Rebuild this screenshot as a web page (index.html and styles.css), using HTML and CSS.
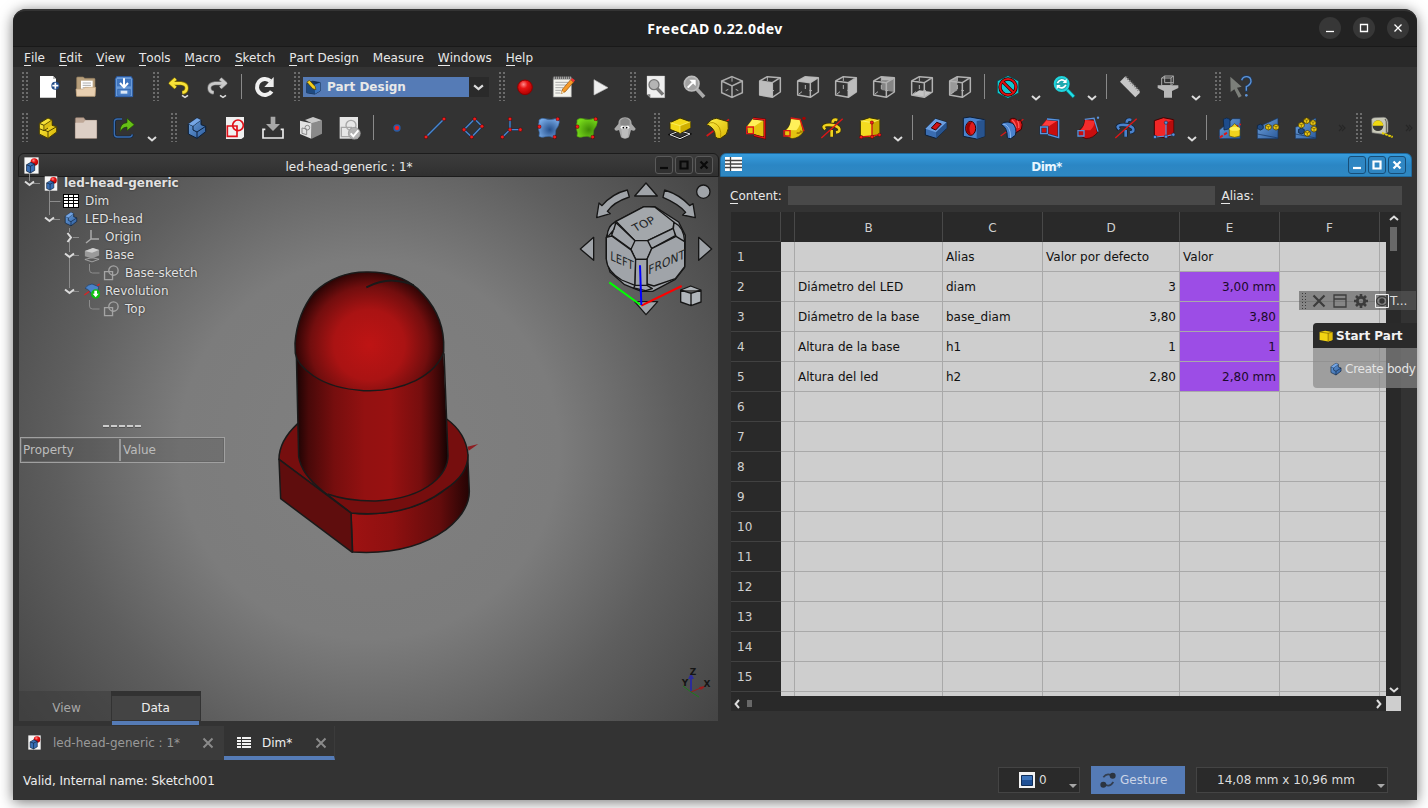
FILE: index.html
```html
<!DOCTYPE html>
<html lang="en">
<head>
<meta charset="utf-8">
<title>FreeCAD 0.22.0dev</title>
<link rel="stylesheet" href="styles.css">
</head>
<body>
<svg class="defs" width="0" height="0" aria-hidden="true">
<defs>
<linearGradient id="gy" x1="0" y1="0" x2="1" y2="1"><stop offset="0" stop-color="#fff04a"/><stop offset="1" stop-color="#d8b400"/></linearGradient>
<linearGradient id="gb" x1="0" y1="0" x2="1" y2="1"><stop offset="0" stop-color="#6fa2dc"/><stop offset="1" stop-color="#2c5c9e"/></linearGradient>
<radialGradient id="gball" cx=".4" cy=".3" r=".7"><stop offset="0" stop-color="#ff8a8a"/><stop offset=".4" stop-color="#e81414"/><stop offset="1" stop-color="#b00000"/></radialGradient>
<radialGradient id="gblob" cx=".55" cy=".6" r=".6"><stop offset="0" stop-color="#26508c"/><stop offset="1" stop-color="#76a8e4"/></radialGradient>
<radialGradient id="ggrn" cx=".6" cy=".6" r=".6"><stop offset="0" stop-color="#3f8a06"/><stop offset="1" stop-color="#76d81a"/></radialGradient>
</defs>
<symbol id="new" viewBox="0 0 72 72"><path d="M12 3h39l9 9v56H12z" fill="#fff"/><path d="M51 3v9h9z" fill="#bbb"/><circle cx="58" cy="32" r="12" fill="#204a87"/><path d="M58 23v18M49 32h18" stroke="#fff" stroke-width="5"/></symbol>
<symbol id="open" viewBox="0 0 72 72"><path d="M8 9q0-3 3-3h17l4 4h28q3 0 3 3v50H8z" fill="#b79f7c" stroke="#8f7a5c" stroke-width="2"/><path d="M21 17h35v30H21z" fill="#fff"/><path d="M26 24h25M26 31h25M26 38h18" stroke="#aaa" stroke-width="3"/><path d="M6 42h22l5-5h32l-2 27H8z" fill="#e8cfb0" stroke="#c0a27c" stroke-width="2"/></symbol>
<symbol id="save" viewBox="0 0 72 72"><path d="M14 5h44l4 8v52H10V13z" fill="#6a9bd8" stroke="#2a5ca8" stroke-width="3"/><path d="M15 12h42v22H15z" fill="#3f74bd"/><path d="M36 10v24M24 24l12 13 12-13" stroke="#fff" stroke-width="6" fill="none"/><path d="M17 43h38v18H17z" fill="#4a80c8" stroke="#2a5ca8" stroke-width="2"/><path d="M26 47h20v9H26z" fill="#dbe7f7"/></symbol>
<symbol id="undo" viewBox="0 0 72 72"><g fill="none" stroke="#8a7400" stroke-width="12" stroke-linejoin="round"><path d="M12 25h30q17 2 17 14t-13 14"/><path d="M26 11L11 25l15 13"/></g><g fill="none" stroke="#f8e238" stroke-width="8"><path d="M12 25h30q17 2 17 14t-13 14"/><path d="M26 11L11 25l15 13"/></g><path d="M45 61l9 6 9-6" stroke="#ddd" stroke-width="5" fill="none"/></symbol>
<symbol id="redo" viewBox="0 0 72 72"><g fill="none" stroke="#777" stroke-width="12" stroke-linejoin="round"><path d="M60 25H30q-17 2-17 14t13 14"/><path d="M46 11l15 14-15 13"/></g><g fill="none" stroke="#cacaca" stroke-width="8"><path d="M60 25H30q-17 2-17 14t13 14"/><path d="M46 11l15 14-15 13"/></g><path d="M45 61l9 6 9-6" stroke="#ddd" stroke-width="5" fill="none"/></symbol>
<symbol id="reload" viewBox="0 0 72 72"><path d="M56 49A24 24 0 1 1 52 18" fill="none" stroke="#f0f0f0" stroke-width="12"/><path d="M62 6v30H34z" fill="#eee"/></symbol>
<symbol id="pd" viewBox="0 0 72 72"><path d="M8 20l26-10 34 6v38L44 68 8 62z" fill="#143766" stroke="#0c1c30" stroke-width="3"/><path d="M42 26l26-10v38L44 68z" fill="#3d75be"/><path d="M8 20l34 6 2 42-36-6z" fill="#1f4a80"/><path d="M8 14l12-8 26 28 3 14-14-4z" fill="#f4cf1c" stroke="#4a3b00" stroke-width="3"/></symbol>
<symbol id="rec" viewBox="0 0 72 72"><circle cx="36" cy="37" r="22" fill="url(#gball)" stroke="#8c0000" stroke-width="3"/></symbol>
<symbol id="note" viewBox="0 0 72 72"><path d="M7 8h54v58H7z" fill="#f4f4ee" stroke="#999" stroke-width="2"/><path d="M7 4h54v9H7z" fill="#555"/><path d="M10 5v7M16 5v7M22 5v7M28 5v7M34 5v7M40 5v7M46 5v7M52 5v7M58 5v7" stroke="#ddd" stroke-width="2"/><path d="M13 22h38M13 30h32M13 38h24M13 46h18M13 54h14" stroke="#9a9a9a" stroke-width="2.5"/><path d="M30 56l5-14 24-28 9 7-25 29z" fill="#f59a2a" stroke="#8a4a08" stroke-width="2"/><path d="M59 14l4-5 9 7-4 6z" fill="#e33"/><path d="M30 56l3-9 6 6z" fill="#f2dcae"/></symbol>
<symbol id="play" viewBox="0 0 72 72"><path d="M15 14v46l42-22z" fill="#eee" stroke="#bbb" stroke-width="2"/></symbol>
<symbol id="fit" viewBox="0 0 72 72"><path d="M9 3h53v65H19L9 58z" fill="#efefef" stroke="#ccc" stroke-width="1"/><path d="M9 58h10v10z" fill="#777"/><path d="M39 40l18 19" stroke="#777" stroke-width="10"/><circle cx="30" cy="29" r="15" fill="#b5b5b5" stroke="#777" stroke-width="4"/></symbol>
<symbol id="fitsel" viewBox="0 0 72 72"><path d="M44 42l22 24" stroke="#aaa" stroke-width="11"/><circle cx="29" cy="26" r="22" fill="#a2a2a2" stroke="#bcbcbc" stroke-width="5"/><path d="M17 38l15-15" stroke="#fff" stroke-width="6"/><path d="M22 14h19v19z" fill="#fff"/></symbol>
<symbol id="iso" viewBox="0 0 72 72"><g fill="none" stroke="#adadad" stroke-width="4.500"><path d="M36 5l31 13v35L36 67 5 53V18zM5 18l31 15 31-15M36 33v34"/><path d="M36 5v15M17 47l8-4M55 47l-8-4" stroke-width="3"/></g></symbol>
<symbol id="wire" viewBox="0 0 72 72"><g fill="none" stroke="#b2b2b2" stroke-width="4.500" stroke-linejoin="round"><path d="M5 18l38 5v44L5 60zM5 18L28 5l39 3v43L43 67M43 23L67 8"/><path d="M28 5v13M28 30v12M9 57l9-7M40 46l8 1" stroke-width="3"/></g></symbol>
<symbol id="vfront" viewBox="0 0 72 72"><use href="#wire"/><path d="M5 18l38 5v44L5 60z" fill="#bdbdbd"/></symbol>
<symbol id="vtop" viewBox="0 0 72 72"><use href="#wire"/><path d="M5 18L28 5l39 3-24 15z" fill="#bdbdbd"/></symbol>
<symbol id="vright" viewBox="0 0 72 72"><use href="#wire"/><path d="M43 23L67 8v43L43 67z" fill="#bdbdbd"/></symbol>
<symbol id="vrear" viewBox="0 0 72 72"><path d="M28 5l39 3v43l-39-6z" fill="#858585"/><path d="M28 5l39 3-7 8H30z" fill="#b5b5b5"/><use href="#wire"/></symbol>
<symbol id="vbottom" viewBox="0 0 72 72"><path d="M5 60l23-14 39 5-24 16z" fill="#c4c4c4"/><use href="#wire"/></symbol>
<symbol id="vleft" viewBox="0 0 72 72"><path d="M5 18L28 5v41L5 60z" fill="#999"/><use href="#wire"/></symbol>
<symbol id="nostyle" viewBox="0 0 72 72"><path d="M36 2l32 16v36L36 70 4 54V18z" fill="#12c8d0" stroke="#063f42" stroke-width="2"/><circle cx="36" cy="36" r="24" fill="none" stroke="#2a0000" stroke-width="10"/><path d="M19 19l34 34" stroke="#2a0000" stroke-width="10"/><circle cx="36" cy="36" r="24" fill="none" stroke="#e01212" stroke-width="6"/><path d="M19 19l34 34" stroke="#e01212" stroke-width="6"/></symbol>
<symbol id="sync" viewBox="0 0 72 72"><path d="M44 43l22 23" stroke="#0a7f85" stroke-width="11"/><path d="M46 45l19 20" stroke="#20dfe6" stroke-width="7"/><circle cx="29" cy="27" r="21" fill="#20a8ae" stroke="#1fd6de" stroke-width="6"/><path d="M16 24q11-16 24-4M42 30q-11 15-24 4" stroke="#fff" stroke-width="5" fill="none"/><path d="M44 11v13H32zM14 43V30h12z" fill="#fff"/></symbol>
<symbol id="ruler" viewBox="0 0 72 72"><path d="M6 20L22 4l43 44v6L52 67z" fill="#c6c6c6"/><path d="M24 6l38 40" stroke="#777" stroke-width="8" stroke-dasharray="2.500 5"/></symbol>
<symbol id="scale" viewBox="0 0 72 72"><g fill="none" stroke="#aaa" stroke-width="3"><path d="M17 9l9-6h26v22l-7 7H17zM17 9h28v23M45 9l7-6M26 3v20h26"/></g><path d="M5 31h62v8L48 48v20H24V48L5 39z" fill="#b8b8b8"/></symbol>
<symbol id="whats" viewBox="0 0 72 72"><path d="M4 5l34 30-14 3 14 25-9 5-13-25L5 51z" fill="#7c7f7a"/><path d="M38 16Q42 4 54 5t12 15q-2 10-14 15v15" fill="none" stroke="#1c3c66" stroke-width="8"/><path d="M38 16Q42 4 54 5t12 15q-2 10-14 15v12" fill="none" stroke="#5f94d6" stroke-width="4"/><circle cx="52" cy="61" r="4" fill="#5f94d6"/></symbol>
<symbol id="part" viewBox="0 0 72 72"><path d="M10 22L36 6l12 6v16l14 4v16L36 67 10 54z" fill="url(#gy)" stroke="#4c4000" stroke-width="3"/><path d="M10 22l14 6 24-16M24 28v14l12 5 26-15M36 47v20M10 38l14 6 12-8" fill="none" stroke="#4c4000" stroke-width="3"/><path d="M24 28l24-16v16L24 42z" fill="#caa800" opacity=".5"/></symbol>
<symbol id="folder" viewBox="0 0 72 72"><path d="M4 8q0-3 3-3h22l6 8h33v54H4z" fill="#bfa897" stroke="#8f7a6c" stroke-width="2"/><path d="M4 20h24l6-7h34v54H4z" fill="#ddcfc5"/></symbol>
<symbol id="link" viewBox="0 0 72 72"><path d="M30 9H16q-9 0-9 9v36q0 9 9 9h36q8 0 9-8" fill="none" stroke="#0d233f" stroke-width="8"/><path d="M30 9H16q-9 0-9 9v36q0 9 9 9h36q8 0 9-8" fill="none" stroke="#3a6cae" stroke-width="4"/><path d="M24 47q0-26 21-27V7l22 19-22 18V33q-12-1-21 14z" fill="#66c016" stroke="#1c4a00" stroke-width="2"/></symbol>
<symbol id="body" viewBox="0 0 72 72"><path d="M10 24L36 6l12 6v14l14 5v16L36 67 10 54z" fill="url(#gb)" stroke="#0c1f38" stroke-width="3"/><path d="M10 24l14 6 24-18M24 30v12l12 6 26-17M36 48v19" fill="none" stroke="#0c1f38" stroke-width="3"/><path d="M10 24L36 6l12 6-24 18z" fill="#7cadec" opacity=".8"/></symbol>
<symbol id="sketch" viewBox="0 0 72 72"><path d="M9 3h54v60l-8 6H9z" fill="#f0f0f0"/><g fill="none" stroke="#e01018" stroke-width="5"><path d="M13 30h29v31H13z"/><circle cx="45" cy="28" r="16"/></g></symbol>
<symbol id="import" viewBox="0 0 72 72"><path d="M29 2h14v22h14L36 45 15 24h14z" fill="#a8a8a8"/><path d="M13 40H6v26h60V40h-7" fill="none" stroke="#ececec" stroke-width="5"/></symbol>
<symbol id="mapsk" viewBox="0 0 72 72"><path d="M18 12L42 3l27 10-28 10z" fill="#c8c8c8"/><path d="M36 22l33-9v40L38 68z" fill="#8a8a8a"/><path d="M3 14l34 8v46L3 54z" fill="#e2e2e2"/><g fill="none" stroke="#8a8a8a" stroke-width="3"><path d="M9 36l14 3v17L9 52z"/><circle cx="25" cy="35" r="7"/></g></symbol>
<symbol id="valid" viewBox="0 0 72 72"><path d="M8 3h55v65H8z" fill="#e6e6e6"/><g fill="none" stroke="#a6a6a6" stroke-width="4"><path d="M13 34h30v28H13z"/><circle cx="42" cy="28" r="15"/></g><circle cx="52" cy="52" r="18" fill="#b2b2b2" stroke="#909090" stroke-width="2"/><path d="M41 52l8 9 15-18" fill="none" stroke="#fff" stroke-width="6"/></symbol>
<symbol id="dot" viewBox="0 0 72 72"><circle cx="36" cy="36" r="11" fill="#2a5ca4"/><circle cx="36" cy="36" r="6.500" fill="#ef2020"/></symbol>
<symbol id="nd" viewBox="0 0 14 14"><circle cx="7" cy="7" r="5.500" fill="#f01c1c" stroke="#4a0000" stroke-width="1.500"/></symbol>
<symbol id="line" viewBox="0 0 72 72"><path d="M9 63L63 9" stroke="#14304f" stroke-width="7"/><path d="M9 63L63 9" stroke="#4c86cc" stroke-width="4"/><use href="#nd" x="2" y="56" width="14" height="14"/><use href="#nd" x="56" y="2" width="14" height="14"/></symbol>
<symbol id="plane" viewBox="0 0 72 72"><path d="M41 9l22 22-31 32L9 41z" fill="none" stroke="#14304f" stroke-width="7"/><path d="M41 9l22 22-31 32L9 41z" fill="none" stroke="#4c86cc" stroke-width="4"/><use href="#nd" x="34" y="2" width="14" height="14"/><use href="#nd" x="56" y="24" width="14" height="14"/><use href="#nd" x="25" y="56" width="14" height="14"/><use href="#nd" x="2" y="34" width="14" height="14"/></symbol>
<symbol id="cs" viewBox="0 0 72 72"><path d="M33 8v33h31M33 41L10 64" fill="none" stroke="#14304f" stroke-width="7"/><path d="M33 8v33h31M33 41L10 64" fill="none" stroke="#4c86cc" stroke-width="4"/><use href="#nd" x="26" y="2" width="14" height="14"/><use href="#nd" x="26" y="34" width="14" height="14"/><use href="#nd" x="57" y="34" width="14" height="14"/><use href="#nd" x="3" y="56" width="14" height="14"/></symbol>
<symbol id="blobb" viewBox="0 0 72 72"><path d="M6 12q8-8 18-4 18 7 40-3 6 14-1 26-10 12-8 20 1 10-6 14-12-7-24-3-12 4-19-1 3-12-1-20-3-10 1-22z" fill="url(#gblob)" stroke="#3668a8" stroke-width="2"/><use href="#nd" x="0" y="25" width="14" height="14"/><use href="#nd" x="55" y="2" width="14" height="14"/><use href="#nd" x="46" y="56" width="14" height="14"/></symbol>
<symbol id="blobg" viewBox="0 0 72 72"><path d="M6 12q8-8 18-4 18 7 40-3 6 14-1 26-10 12-8 20 1 10-6 14-12-7-24-3-12 4-19-1 3-12-1-20-3-10 1-22z" fill="url(#ggrn)" stroke="#4d9c0e" stroke-width="2"/><use href="#nd" x="0" y="25" width="14" height="14"/><use href="#nd" x="55" y="2" width="14" height="14"/><use href="#nd" x="46" y="56" width="14" height="14"/></symbol>
<symbol id="sheep" viewBox="0 0 72 72"><path d="M36 4q-20 0-20 20L4 38q2 10 14 4l6 22q12 8 24 0l6-22q12 6 14-4L56 24Q56 4 36 4z" fill="#a9a9a9"/><path d="M22 14q14-16 28 0v14H22z" fill="#8a8a8a"/><path d="M24 30h24l-4 34q-8 5-16 0z" fill="#bdbdbd"/><ellipse cx="29" cy="34" rx="6" ry="5" fill="#fff"/><ellipse cx="43" cy="34" rx="6" ry="5" fill="#fff"/><circle cx="31" cy="35" r="2.500"/><circle cx="41" cy="35" r="2.500"/></symbol>
<symbol id="pad" viewBox="0 0 72 72"><path d="M6 56l30-12 30 10-30 14z" fill="none" stroke="#111" stroke-width="7"/><path d="M6 56l30-12 30 10-30 14z" fill="none" stroke="#e8e8e8" stroke-width="3"/><path d="M6 20L36 6l31 11v18L36 52 6 40z" fill="#f2d818" stroke="#3c3300" stroke-width="3"/><path d="M36 29l31-12v18L36 52z" fill="#cfae00"/><path d="M6 20l30 9 31-12M36 29v23" fill="none" stroke="#fff47a" stroke-width="2"/></symbol>
<symbol id="rev" viewBox="0 0 72 72"><path d="M2 60L69 10" stroke="#d81818" stroke-width="5"/><path d="M3 26Q14 8 32 7l34 10q4 22-5 38L42 68q-10 0-14-6Q28 36 3 26z" fill="url(#gy)" stroke="#3c3300" stroke-width="3"/><path d="M4 26q8-8 18-6 26 8 22 46" fill="none" stroke="#b89800" stroke-width="3"/></symbol>
<symbol id="loft" viewBox="0 0 72 72"><path d="M9 31L26 8l36 3v54l-30-10-20-4z" fill="#e4c410"/><path d="M9 33L27 9l33 3-32 21z" fill="#fff05a"/><path d="M27 7l35 4v55l-32-8" fill="none" stroke="#5c0000" stroke-width="7"/><path d="M27 7l35 4v55l-32-8M8 33h20v20H8z" fill="none" stroke="#e01616" stroke-width="4"/></symbol>
<symbol id="sweep" viewBox="0 0 72 72"><path d="M8 44Q28 30 26 8l30 2 8 38q-12 18-34 20L8 58z" fill="#e4c410" stroke="#3c3300" stroke-width="2"/><path d="M27 10l28 3q2 14-12 30L14 42q12-12 13-32z" fill="#fff05a"/><path d="M44 50q10 4 12-4l6 2" stroke="#a87e00" stroke-width="5" fill="none"/><path d="M26 6l28 4 12 36M6 44h18v16H6z" fill="none" stroke="#e01616" stroke-width="4"/><circle cx="66" cy="7" r="5" fill="#a00"/></symbol>
<symbol id="helix" viewBox="0 0 72 72"><g fill="none" stroke="#3c3300" stroke-width="12"><path d="M38 20q0-12 14-8M16 40q-12-10 4-13 24-2 36 8 8 12-8 14M35 42v20"/></g><g fill="none" stroke="#f0d21e" stroke-width="8"><path d="M38 20q0-12 14-8M16 40q-12-10 4-13 24-2 36 8 8 12-8 14M35 42v20"/></g><path d="M4 66L68 8" stroke="#e01616" stroke-width="4"/></symbol>
<symbol id="prim" viewBox="0 0 72 72"><path d="M7 14L34 5l31 6v44L42 66 7 60z" fill="#f4dc20" stroke="#3c3300" stroke-width="3"/><path d="M42 20l22-9v43L42 65z" fill="#c9a800"/><path d="M8 14l34 6 22-9" fill="none" stroke="#fff78a" stroke-width="2"/><path d="M42 20v40L9 63M42 60l22-4" fill="none" stroke="#d01212" stroke-width="4"/><use href="#nd" x="35" y="13" width="13" height="13"/><use href="#nd" x="3" y="57" width="13" height="13"/><use href="#nd" x="36" y="56" width="13" height="13"/><use href="#nd" x="58" y="50" width="13" height="13"/></symbol>
<symbol id="pocket" viewBox="0 0 72 72"><path d="M4 38L34 8l34 11v18L36 67 4 57z" fill="#3a6db2" stroke="#0c1f38" stroke-width="3"/><path d="M4 38L34 8l34 11-32 30z" fill="#6b9fe0"/><path d="M36 49l32-30v18L36 67z" fill="#28548f"/><path d="M22 36l16-17 14 5-17 18z" fill="#d01414" stroke="#300" stroke-width="3"/></symbol>
<symbol id="hole" viewBox="0 0 72 72"><path d="M4 6l20-3 44 8v50l-24 8L4 61z" fill="#4a82cc" stroke="#0c1f38" stroke-width="3"/><path d="M44 15l24-4v50l-24 8z" fill="#28548f"/><ellipse cx="26" cy="37" rx="15" ry="21" fill="#e01c1c" stroke="#300" stroke-width="3"/><path d="M30 18q-14 18-3 38Q13 54 13 36t17-18z" fill="#900"/></symbol>
<symbol id="groove" viewBox="0 0 72 72"><path d="M2 60L70 10" stroke="#d81818" stroke-width="4"/><path d="M30 10q14-8 22 4l10-2q8 14 2 28l-16 10-18-10z" fill="#d81818" stroke="#400" stroke-width="3"/><path d="M36 12q10 8 12 24M52 14q6 8 4 22" fill="none" stroke="#ff5c5c" stroke-width="4"/><path d="M4 26q6-10 20-8l14 4q14 14 8 36l-14 10q-8 0-10-4Q22 34 4 26z" fill="#4a82cc" stroke="#0c1f38" stroke-width="3"/><path d="M8 24q24 2 24 42" fill="none" stroke="#8ab6f0" stroke-width="3"/></symbol>
<symbol id="sloft" viewBox="0 0 72 72"><path d="M9 31L26 10l34 2v53l-30-10-20-4z" fill="#c80e0e"/><path d="M9 33L27 11l33 2-32 21z" fill="#ff3c3c"/><path d="M27 9l35 3v53l-32-9M8 33h20v20H8z" fill="none" stroke="#14304f" stroke-width="7"/><path d="M27 9l35 3v53l-32-9M8 33h20v20H8z" fill="none" stroke="#5a93dc" stroke-width="4"/></symbol>
<symbol id="ssweep" viewBox="0 0 72 72"><path d="M8 44Q28 30 26 10l30 2 8 38q-12 16-34 18L8 58z" fill="#c80e0e" stroke="#300" stroke-width="2"/><path d="M27 12l28 3q2 14-12 28l-29-1q12-12 13-30z" fill="#f42c2c"/><path d="M26 10l28-3 12 40M6 44h18v16H6z" fill="none" stroke="#5a93dc" stroke-width="4"/><circle cx="66" cy="5" r="3.500" fill="#5a93dc"/></symbol>
<symbol id="shelix" viewBox="0 0 72 72"><g fill="none" stroke="#0c1f38" stroke-width="12"><path d="M38 20q0-12 14-8M16 40q-12-10 4-13 24-2 36 8 8 12-8 14M35 42v20"/></g><g fill="none" stroke="#4a82cc" stroke-width="8"><path d="M38 20q0-12 14-8M16 40q-12-10 4-13 24-2 36 8 8 12-8 14M35 42v20"/></g><path d="M4 66L68 8" stroke="#e01616" stroke-width="4"/></symbol>
<symbol id="sprim" viewBox="0 0 72 72"><path d="M7 14L34 5l31 6v44L42 66 7 60z" fill="#f22626" stroke="#400" stroke-width="3"/><path d="M42 20l22-9v43L42 65z" fill="#b80c0c"/><path d="M42 20v40L9 63M42 60l22-4" fill="none" stroke="#5a93dc" stroke-width="3.500"/><g fill="#5a93dc" stroke="#14304f" stroke-width="2"><circle cx="42" cy="20" r="5"/><circle cx="9" cy="63" r="5"/><circle cx="42" cy="62" r="5"/><circle cx="64" cy="56" r="5"/></g></symbol>
<symbol id="mirror" viewBox="0 0 72 72"><path d="M4 42L44 8h23v60H4z" fill="url(#gb)" stroke="#16335c" stroke-width="2"/><path d="M16 10q10-8 20 0v28l-18 4z" fill="#1d4c8c" stroke="#0c1f38" stroke-width="2"/><path d="M6 64l24-16M52 34l16-10" stroke="#e01616" stroke-width="6" stroke-dasharray="10 5"/><path d="M34 38l16-15 16 15v22q-16 8-32 0z" fill="#f0d21e" stroke="#5a4a00" stroke-width="2"/><ellipse cx="50" cy="38" rx="16" ry="6" fill="#fff05a"/></symbol>
<symbol id="minic" viewBox="0 0 20 20"><path d="M2 6l8-4 8 4v8l-8 5-8-5z" fill="#ecc814" stroke="#4a3c00" stroke-width="2"/><path d="M2 6l8 3 8-3M10 9v9" fill="none" stroke="#4a3c00" stroke-width="1.500"/></symbol>
<symbol id="minib" viewBox="0 0 20 20"><path d="M2 6l8-4 8 4v8l-8 5-8-5z" fill="#1f4a84" stroke="#0c1f38" stroke-width="2"/></symbol>
<symbol id="linpat" viewBox="0 0 72 72"><path d="M4 34L66 6v62H4z" fill="url(#gb)" stroke="#16335c" stroke-width="2"/><path d="M4 54l62 12" stroke="#16335c" stroke-width="2"/><use href="#minib" x="2" y="22" width="22" height="22"/><use href="#minic" x="26" y="22" width="22" height="22"/><use href="#minic" x="49" y="22" width="22" height="22"/></symbol>
<symbol id="polpat" viewBox="0 0 72 72"><path d="M4 34L66 6v62H4z" fill="url(#gb)" stroke="#16335c" stroke-width="2"/><path d="M4 54l62 12" stroke="#16335c" stroke-width="2"/><use href="#minib" x="11" y="34" width="22" height="22"/><use href="#minic" x="11" y="16" width="22" height="22"/><use href="#minic" x="27" y="3" width="22" height="22"/><use href="#minic" x="46" y="9" width="22" height="22"/><use href="#minic" x="49" y="28" width="22" height="22"/><use href="#minic" x="29" y="41" width="22" height="22"/></symbol>
<symbol id="tape" viewBox="0 0 72 72"><path d="M5 10Q6 5 14 5l26-1q12 0 14 14v30l-14 7-34-5z" fill="#c9c9b8" stroke="#777" stroke-width="2"/><circle cx="24" cy="29" r="16" fill="#3a3a36"/><path d="M8 29a16 16 0 0 1 32 0z" fill="#f0d810"/><path d="M45 9q5 4 4 18v22" stroke="#55554c" stroke-width="3" fill="none"/><path d="M36 51l32 12" stroke="#e8d000" stroke-width="6" stroke-dasharray="8 2"/></symbol>
<symbol id="doc" viewBox="0 0 42 48"><path d="M1 1h40v46H1z" fill="#f6f6f6"/><circle cx="29" cy="14" r="10.500" fill="url(#gball)"/><path d="M7 22l12-7 11 5v18l-12 7-11-5z" fill="#3a6fb5" stroke="#0c1f38" stroke-width="2"/><path d="M7 22l11 4v19M18 26l12-6" fill="none" stroke="#0c1f38" stroke-width="2"/></symbol>
<symbol id="skg" viewBox="0 0 72 72"><g fill="none" stroke="#a4a4a4" stroke-width="6"><path d="M7 30h36v36H7z"/><circle cx="47" cy="25" r="21"/></g></symbol>
<symbol id="chev" viewBox="0 0 10 6"><path d="M1 1l4 3.400L9 1" fill="none" stroke="#dcdcdc" stroke-width="2"/></symbol>
</svg>

<div class="window">
  <header class="titlebar"><span class="wtitle">FreeCAD 0.22.0dev</span>
    <div class="wbtns">
      <i><svg viewBox="0 0 22 22"><path d="M7 14.500h8"/></svg></i>
      <i><svg viewBox="0 0 22 22"><path d="M7.500 7.500h7v7h-7z"/></svg></i>
      <i><svg viewBox="0 0 22 22"><path d="M7.500 7.500l7 7M14.500 7.500l-7 7"/></svg></i>
    </div>
  </header>
  <nav class="menu"><span><u>F</u>ile</span><span><u>E</u>dit</span><span><u>V</u>iew</span><span><u>T</u>ools</span><span><u>M</u>acro</span><span><u>S</u>ketch</span><span><u>P</u>art Design</span><span>Measure</span><span><u>W</u>indows</span><span><u>H</u>elp</span></nav>

  <div class="toolbar">
    <b class="grip first"></b><svg class="ic"><use href="#new"/></svg><svg class="ic"><use href="#open"/></svg><svg class="ic"><use href="#save"/></svg>
    <b class="grip"></b><svg class="ic"><use href="#undo"/></svg><svg class="ic"><use href="#redo"/></svg><b class="sep"></b><svg class="ic"><use href="#reload"/></svg>
    <b class="grip"></b><div class="combo"><div class="combo-val"><svg><use href="#pd"/></svg>Part Design</div><svg class="cchev"><use href="#chev"/></svg></div>
    <b class="grip"></b><svg class="ic"><use href="#rec"/></svg><svg class="ic"><use href="#note"/></svg><svg class="ic"><use href="#play"/></svg>
    <b class="grip"></b><svg class="ic"><use href="#fit"/></svg><svg class="ic"><use href="#fitsel"/></svg><svg class="ic"><use href="#iso"/></svg><svg class="ic"><use href="#vfront"/></svg><svg class="ic"><use href="#vtop"/></svg><svg class="ic"><use href="#vright"/></svg><svg class="ic"><use href="#vrear"/></svg><svg class="ic"><use href="#vbottom"/></svg><svg class="ic"><use href="#vleft"/></svg><b class="sep"></b><svg class="ic"><use href="#nostyle"/></svg><svg class="dd"><use href="#chev"/></svg><svg class="ic"><use href="#sync"/></svg><svg class="dd"><use href="#chev"/></svg><b class="sep"></b><svg class="ic"><use href="#ruler"/></svg><svg class="ic"><use href="#scale"/></svg><svg class="dd"><use href="#chev"/></svg>
    <b class="grip"></b><svg class="ic"><use href="#whats"/></svg>
  </div>
  <div class="toolbar second">
    <b class="grip first"></b><svg class="ic"><use href="#part"/></svg><svg class="ic"><use href="#folder"/></svg><svg class="ic"><use href="#link"/></svg><svg class="dd"><use href="#chev"/></svg>
    <b class="grip"></b><svg class="ic"><use href="#body"/></svg><svg class="ic"><use href="#sketch"/></svg><svg class="ic"><use href="#import"/></svg><svg class="ic"><use href="#mapsk"/></svg><svg class="ic"><use href="#valid"/></svg><b class="sep"></b><svg class="ic"><use href="#dot"/></svg><svg class="ic"><use href="#line"/></svg><svg class="ic"><use href="#plane"/></svg><svg class="ic"><use href="#cs"/></svg><svg class="ic"><use href="#blobb"/></svg><svg class="ic"><use href="#blobg"/></svg><svg class="ic"><use href="#sheep"/></svg>
    <b class="grip"></b><svg class="ic"><use href="#pad"/></svg><svg class="ic"><use href="#rev"/></svg><svg class="ic"><use href="#loft"/></svg><svg class="ic"><use href="#sweep"/></svg><svg class="ic"><use href="#helix"/></svg><svg class="ic"><use href="#prim"/></svg><svg class="dd"><use href="#chev"/></svg><b class="sep"></b><svg class="ic"><use href="#pocket"/></svg><svg class="ic"><use href="#hole"/></svg><svg class="ic"><use href="#groove"/></svg><svg class="ic"><use href="#sloft"/></svg><svg class="ic"><use href="#ssweep"/></svg><svg class="ic"><use href="#shelix"/></svg><svg class="ic"><use href="#sprim"/></svg><svg class="dd"><use href="#chev"/></svg><b class="sep"></b><svg class="ic"><use href="#mirror"/></svg><svg class="ic"><use href="#linpat"/></svg><svg class="ic"><use href="#polpat"/></svg>
    <svg class="more" viewBox="0 0 8 8"><path d="M1 1l3 3-3 3M4 1l3 3-3 3"/></svg><b class="grip"></b><svg class="ic"><use href="#tape"/></svg><svg class="more last" viewBox="0 0 8 8"><path d="M1 1l3 3-3 3M4 1l3 3-3 3"/></svg>
  </div>

  <main class="mdi">
    <section class="sub left">
      <div class="subtitle"><svg class="sicon"><use href="#doc"/></svg><span>led-head-generic : 1*</span>
        <div class="sbtns"><i><svg viewBox="0 0 16 16"><path d="M4 11h8"/></svg></i><i><svg viewBox="0 0 16 16"><path d="M4.500 4.500h7v7h-7z"/></svg></i><i><svg viewBox="0 0 16 16"><path d="M4.500 4.500l7 7M11.500 4.500l-7 7"/></svg></i></div>
      </div>
      <div class="view">
        <div class="dock">
          <div class="tree">
            <svg class="branches" width="100" height="150" viewBox="0 0 100 150"><g fill="none" stroke="#8c8c8c" stroke-width="1"><path d="M10.500 0v7M14 9.500h7M30.500 17v24M30.500 27.500h11M34 45.500h7M50.500 54v4M54 63.500h6M50.500 67v11M50.500 84v30M54 81.500h6M54 117.500h6M70.500 90v6q0 3 3 3h7M70.500 126v6q0 3 3 3h7"/></g><g fill="none" stroke="#dcdcdc" stroke-width="2"><path d="M6 7.500l4.500 3.500L15 7.500M26 43.500l4.500 3.500L35 43.500M48.500 59l3.500 4.500-3.500 4.500M46 79.500l4.500 3.500L55 79.500M46 115.500l4.500 3.500L55 115.500"/></g></svg>
            <div class="row l0"><svg><use href="#doc"/></svg><b>led-head-generic</b></div>
            <div class="row l1"><svg class="sheet" viewBox="0 0 16 14"><path d="M0 0h16v14H0z" fill="#000"/><path d="M1 1h4v2H1zM6 1h4v2H6zM11 1h4v2h-4zM1 4h4v2H1zM6 4h4v2H6zM11 4h4v2h-4zM1 7h4v2H1zM6 7h4v2H6zM11 7h4v2h-4zM1 10h4v3H1zM6 10h4v3H6zM11 10h4v3h-4z" fill="#fff"/></svg>Dim</div>
            <div class="row l1"><svg><use href="#body"/></svg>LED-head</div>
            <div class="row l2"><svg viewBox="0 0 16 16"><path d="M7 1v9h8M7 10l-5 4" fill="none" stroke="#aaa" stroke-width="1.500"/></svg>Origin</div>
            <div class="row l2"><svg viewBox="0 0 72 72"><path d="M4 56l32-8 32 7-32 12z" fill="none" stroke="#aaa" stroke-width="4"/><path d="M4 18L40 5l28 8v25L36 52 4 42z" fill="#9a9a9a"/><path d="M4 18L40 5l28 8-32 13z" fill="#d0d0d0"/></svg>Base</div>
            <div class="row l3"><svg><use href="#skg"/></svg>Base-sketch</div>
            <div class="row l2"><svg viewBox="0 0 48 48"><path d="M1 36L47 3" stroke="#d22" stroke-width="4"/><path d="M3 16Q12 4 24 3l20 8-4 22-16 8Q20 20 3 16z" fill="#4a82c8" stroke="#1c3c66" stroke-width="2"/><circle cx="35" cy="33" r="14" fill="#0fbf0f"/><path d="M31 23h8v9h5l-9 11-9-11h5z" fill="#fff"/></svg>Revolution</div>
            <div class="row l3"><svg><use href="#skg"/></svg>Top</div>
          </div>
          <div class="splitter"><i></i><i></i><i></i><i></i><i></i></div>
          <div class="props"><span>Property</span><span>Value</span></div>
          <div class="ptabs"><span>View</span><span class="on">Data</span></div>
        </div>

        <svg class="model" width="230" height="320" viewBox="0 0 690 960">
          <defs>
            <linearGradient id="cyl"><stop offset="0" stop-color="#1a0303"/><stop offset=".08" stop-color="#480909"/><stop offset=".25" stop-color="#760e0e"/><stop offset=".45" stop-color="#931111"/><stop offset=".62" stop-color="#981111"/><stop offset=".82" stop-color="#760e0e"/><stop offset=".94" stop-color="#3c0707"/><stop offset="1" stop-color="#120202"/></linearGradient>
            <linearGradient id="flange"><stop offset="0" stop-color="#9e1212"/><stop offset=".35" stop-color="#8f1010"/><stop offset=".75" stop-color="#640c0c"/><stop offset="1" stop-color="#240404"/></linearGradient>
            <radialGradient id="dome" gradientUnits="userSpaceOnUse" cx="328" cy="285" r="235"><stop offset="0" stop-color="#be1414"/><stop offset=".45" stop-color="#aa1313"/><stop offset=".75" stop-color="#720e0e"/><stop offset=".92" stop-color="#380606"/><stop offset="1" stop-color="#180303"/></radialGradient>
          </defs>
          <path d="M622 590l33-8-29 20z" fill="#8e1e22"/>
          <g stroke="#1a1a1a" stroke-width="4.500" stroke-linejoin="round">
            <path d="M273 789q80 10 170-15 150-42 180-160l5 110q0 60-70 115-110 78-280 67z" fill="url(#flange)"/>
            <path d="M57 628q0-55 56-107L340 460l220 47q58 42 64 108 0 60-70 104-110 85-281 70z" fill="#760e0e"/>
            <path d="M57 628l216 161 4 118L62 746z" fill="#5f0d0d"/>
            <path d="M109 310l7 310q8 52 56 90 70 46 176 43 110-6 170-54 46-38 46-82l-14-310z" fill="url(#cyl)" stroke="none"/>
            <path d="M109 310l7 310q8 52 70 101l87 68M203 732q60 22 145 21 110-6 170-54 46-38 46-82l-12-307" fill="none"/>
            <path d="M105 280Q112 190 163 127 230 64 325 66q90 0 148 50 74 70 78 160v30q-16 50-84 86-70 34-156 30-94-6-150-44-50-34-55-68z" fill="url(#dome)"/>
            <path d="M319 112q44-22 82-20 36 2 60 14" fill="none" stroke-width="6"/>
          </g>
        </svg>

        <svg class="navcube" width="150" height="150" viewBox="0 75 450 450">
          <g fill="#a0a4a9" stroke="#161616" stroke-width="4" stroke-linejoin="round">
            <path d="M228 99l34 39h-68zM71 262v69l-40-34zM386 262v69l39-34z"/>
            <path d="M172 120l6 21q-48 16-66 43l9 7-41 12 7-44 9 8q30-36 76-47zM284 120l-5 22q47 20 68 45l-9 8 38 8-7-42-10 6q-28-32-75-47z"/>
            <circle cx="400" cy="125" r="20"/>
            <path d="M138 214l84-44h32l72 46 20 40-2 96-28 36-68 36h-34l-50-20-44-38-11-40V262l12-34z"/>
            <path d="M138 214l84-44 32 1 58 46-3 18-76 37h-38z" fill="#a3a7ab"/>
            <path d="M138 214l-6 24-20 24q-2-32 26-48zM138 218l57 54-12 26-58-42zM195 272h38l12 24-14 32h-34l-14-30zM233 272l77-37 6 22-71 39zM312 217q30 14 32 58l-24-10-10-28z"/>
            <path d="M109 262l16-4 58 42 14 28-2 78-40-16q-44-26-46-62z"/>
            <path d="M231 328l14-32 73-37 26 16v75l-28 36-64 22-21-6z"/>
            <path d="M197 328h34v78h-36zM195 406h36l16 10-20 6-36-8z"/>
            <path d="M194 455h69l-35 39z"/>
            <path d="M332 420l30-12 31 12v36l-30 11-31-11zM332 420l31 10 30-10M363 430v37" fill="#b0b5ba"/>
          </g>
          <g class="cubetext"><text transform="matrix(.9 -.42 .52 .78 196 246)">TOP</text><text transform="matrix(.84 .38 -.02 1.060 121 329)">LEFT</text><text transform="matrix(.92 -.42 0 1.060 235 374)">FRONT</text></g>
          <g stroke-width="6" fill="none"><path d="M118 397l94 68" stroke="#0f0"/><path d="M214 467l121-59" stroke="#f00"/><path d="M210 346l4 119" stroke="#00f"/></g>
        </svg>

        <svg class="axis" width="36" height="36" viewBox="0 0 36 36"><path d="M11 24V9" stroke="#2c2c9a" stroke-width="2"/><path d="M11 24l12-5" stroke="#9a1c1c"/><path d="M11 24l-8-6m8 6l8 5" stroke="#1c7a1c"/><path d="M11 5l-3 6h6z" fill="#2c2c9a"/><path d="M26 18l-7 1 2 3z" fill="#9a1c1c"/><text x="13" y="7">Z</text><text x="5" y="18">Y</text><text x="27" y="19">X</text></svg>
      </div>
    </section>

    <section class="sub right">
      <div class="subtitle blue"><svg class="gicon" viewBox="0 0 17 14"><path d="M0 0h17v14H0z" fill="#fff"/><path d="M0 3.500h17M0 7h17M0 10.500h17M5.500 0v14" stroke="#444" stroke-width="1.300"/></svg><span>Dim*</span>
        <div class="sbtns"><i><svg viewBox="0 0 16 16"><path d="M4 11h8"/></svg></i><i><svg viewBox="0 0 16 16"><path d="M4.500 4.500h7v7h-7z"/></svg></i><i><svg viewBox="0 0 16 16"><path d="M4.500 4.500l7 7M11.500 4.500l-7 7"/></svg></i></div>
      </div>
      <div class="cellbar"><span><u>C</u>ontent:</span><div class="field grow"></div><span><u>A</u>lias:</span><div class="field alias"></div></div>
      <div class="sheetbox">
        <div class="tablewrap">
        <table>
          <colgroup><col class="c0"><col class="ca"><col class="cb"><col class="cc"><col class="cd"><col class="ce"><col class="cf"><col class="cg"></colgroup>
          <tr class="head"><th></th><th></th><th>B</th><th>C</th><th>D</th><th>E</th><th>F</th><th></th></tr>
          <tr><th>1</th><td></td><td></td><td>Alias</td><td>Valor por defecto</td><td>Valor</td><td></td><td></td></tr>
          <tr><th>2</th><td></td><td>Diámetro del LED</td><td>diam</td><td class="n">3</td><td class="n p">3,00 mm</td><td></td><td></td></tr>
          <tr><th>3</th><td></td><td>Diámetro de la base</td><td>base_diam</td><td class="n">3,80</td><td class="n p">3,80</td><td></td><td></td></tr>
          <tr><th>4</th><td></td><td>Altura de la base</td><td>h1</td><td class="n">1</td><td class="n p">1</td><td></td><td></td></tr>
          <tr><th>5</th><td></td><td>Altura del led</td><td>h2</td><td class="n">2,80</td><td class="n p">2,80 mm</td><td></td><td></td></tr>
          <tr><th>6</th><td></td><td></td><td></td><td></td><td></td><td></td><td></td></tr>
          <tr><th>7</th><td></td><td></td><td></td><td></td><td></td><td></td><td></td></tr>
          <tr><th>8</th><td></td><td></td><td></td><td></td><td></td><td></td><td></td></tr>
          <tr><th>9</th><td></td><td></td><td></td><td></td><td></td><td></td><td></td></tr>
          <tr><th>10</th><td></td><td></td><td></td><td></td><td></td><td></td><td></td></tr>
          <tr><th>11</th><td></td><td></td><td></td><td></td><td></td><td></td><td></td></tr>
          <tr><th>12</th><td></td><td></td><td></td><td></td><td></td><td></td><td></td></tr>
          <tr><th>13</th><td></td><td></td><td></td><td></td><td></td><td></td><td></td></tr>
          <tr><th>14</th><td></td><td></td><td></td><td></td><td></td><td></td><td></td></tr>
          <tr><th>15</th><td></td><td></td><td></td><td></td><td></td><td></td><td></td></tr>
          <tr><th></th><td></td><td></td><td></td><td></td><td></td><td></td><td></td></tr>
        </table>
        </div>
        <div class="vscroll"><svg class="up"><use href="#chev"/></svg><i></i><svg class="down"><use href="#chev"/></svg></div>
        <div class="hscroll"><svg class="lt"><use href="#chev"/></svg><i></i><svg class="rt"><use href="#chev"/></svg></div>
        <div class="corner"></div>
      </div>
    </section>
  </main>

  <div class="doctabs">
    <div class="dtab one"><svg><use href="#doc"/></svg><span>led-head-generic : 1*</span><svg class="x" viewBox="0 0 12 12"><path d="M1.500 1.500l9 9M10.500 1.500l-9 9"/></svg></div>
    <div class="dtab on"><svg class="list" viewBox="0 0 14 12"><path d="M0 1h4v2H0zM5 1h9v2H5zM0 4h4v2H0zM5 4h9v2H5zM0 7h4v2H0zM5 7h9v2H5zM0 10h4v2H0zM5 10h9v2H5z" fill="#f2f2f2"/></svg><span>Dim*</span><svg class="x" viewBox="0 0 12 12"><path d="M1.500 1.500l9 9M10.500 1.500l-9 9"/></svg></div>
  </div>

  <footer class="status">
    <span class="msg">Valid, Internal name: Sketch001</span>
    <div class="box notif"><svg viewBox="0 0 16 16"><path d="M0 0h16v16H0z" fill="#f2f2f2"/><path d="M2.500 3.500h11v10h-11z" fill="#1e4f94" stroke="#0f2d58"/><path d="M3 4h10v4H3z" fill="#3c74bc"/></svg>0<b class="tri"></b></div>
    <div class="gesture"><svg viewBox="0 0 48 48"><path d="M10 16Q20 2 34 10M40 30Q30 46 16 38" fill="none" stroke="#333f52" stroke-width="5"/><circle cx="38" cy="11" r="9" fill="#2c3440"/><circle cx="10" cy="38" r="9" fill="#2c3440"/></svg>Gesture</div>
    <div class="box dims">14,08 mm x 10,96 mm<b class="tri"></b></div>
  </footer>

  <div class="taskbar"><b class="mgrip"></b><svg viewBox="0 0 14 14"><path d="M1.500 1.500l11 11M12.500 1.500l-11 11" stroke-width="2.200"/></svg><svg viewBox="0 0 14 14"><path d="M1 1h12v12H1zM1 5h12" stroke-width="1.300"/></svg><svg viewBox="0 0 14 14"><circle cx="7" cy="7" r="3.700" stroke-width="2.800"/><path d="M7 0v3M7 11v3M0 7h3M11 7h3M2 2l2 2M10 10l2 2M12 2l-2 2M4 10l-2 2" stroke-width="2.600"/></svg><svg class="eye" viewBox="0 0 14 14"><path d="M.500.500h13v13H.500z" stroke="#eee"/><ellipse cx="7" cy="7" rx="5.500" ry="4.500" stroke-width="1.300"/><circle cx="7" cy="7" r="2.700" fill="#333" stroke="none"/></svg><span>T...</span></div>
  <div class="task"><div class="task-h"><svg viewBox="0 0 46 38"><path d="M2 6L20 2l24 4v26L30 37 2 32z" fill="#f2d412"/><path d="M30 10l14-4v26l-14 5z" fill="#e0bc08"/><path d="M2 6l28 4 14-4M30 10v27" stroke="#6a5600" stroke-width="2" fill="none"/></svg>Start Part</div><div class="task-b"><svg><use href="#body"/></svg>Create body</div></div>
</div>
</body>
</html>
```
FILE: styles.css
```css
* { box-sizing: border-box; }
body { margin: 0; width: 1428px; height: 808px; overflow: hidden; background: #fff; font: 12px/18px "DejaVu Sans", sans-serif; color: #e8e8e8; padding: 9px 11px 8px 13px; }
.defs { position: absolute; }
svg { display: block; flex: none; }
u { text-decoration: none; border-bottom: 1px solid currentColor; display: inline-block; line-height: 13px; }
i { font-style: normal; }
.window { position: relative; width: 1404px; height: 791px; background: #333; border-radius: 13px 13px 0 0; box-shadow: 0 2px 14px rgba(0,0,0,.55); display: flex; flex-direction: column; }

.titlebar { height: 38px; flex: none; background: #222; border-top: 2px solid #343434; border-bottom: 1px solid #191919; border-radius: 13px 13px 0 0; display: flex; align-items: center; justify-content: center; position: relative; font: bold 14px "Noto Sans", sans-serif; letter-spacing: .45px; color: #fff; }
.wbtns { position: absolute; right: 8px; top: 6px; display: flex; gap: 12px; }
.wbtns i { width: 22px; height: 22px; border-radius: 50%; background: #373737; }
.wbtns svg { fill: none; stroke: #fff; stroke-width: 1.3; }
.menu { height: 20px; flex: none; background: #292929; display: flex; gap: 14px; padding: 2px 0 0 11px; }

.toolbar { height: 41px; flex: none; display: flex; align-items: center; padding: 0 0 2px 9px; }
.second { height: 45px; padding-bottom: 6px; }
.ic { width: 24px; height: 24px; margin: 0 7px; }
.grip { width: 6px; height: 29px; flex: none; margin: 0 1px 0 10px; background: repeating-linear-gradient(transparent 0 2px, #333 2px 4px), repeating-linear-gradient(90deg, #6c6c6c 0 2px, #333 2px 4px); }
.grip.first { margin-left: 0; }
.sep { width: 1px; height: 25px; background: #8a8a8a; flex: none; margin: 0 4px 0 5px; }
.dd { width: 10px; height: 6px; margin: 22px 4px 0; }
.more { width: 8px; height: 8px; margin-left: 13px; fill: none; stroke: #272727; stroke-width: 1.2; }
.more.last { margin-left: 4px; }
.combo { width: 186px; height: 20px; margin: 1px 0 0 2px; background: #2a2a2a; display: flex; align-items: center; }
.combo-val { width: 166px; height: 20px; background: #557bb6; display: flex; align-items: center; gap: 6px; font-weight: bold; padding-left: 2px; }
.combo-val svg { width: 16px; height: 16px; }
.cchev { width: 11px; height: 7px; margin-left: 4px; }

.mdi { height: 571px; flex: none; display: flex; padding-left: 5px; gap: 1px; }
.sub.left { width: 701px; }
.subtitle { height: 24px; display: flex; align-items: center; position: relative; justify-content: center; border: 1px solid #1c1c1c; border-radius: 6px 6px 0 0; background: linear-gradient(#3c3c3c, #303030); padding: 3px 39px 0 0; }
.sicon { position: absolute; left: 5px; top: 3px; width: 15px; height: 17px; }
.gicon { position: absolute; left: 4px; top: 3px; width: 17px; height: 14px; }
.sbtns { position: absolute; right: 5px; top: 2px; display: flex; gap: 2px; }
.sbtns i { width: 18px; height: 18px; border: 1px solid #5a5a5a; border-radius: 3px; background: #303030; }
.sbtns svg { width: 16px; height: 16px; fill: none; stroke: #0a0a0a; stroke-width: 2.2; }
.blue { background: linear-gradient(#369cdd, #2b86c4 50%, #2f88c2); border-color: #1f6ba0; font-weight: bold; letter-spacing: -.6px; color: #e8f6ff; }
.blue .sbtns i { background: #2f86c2; border-color: #174e78; }
.blue .sbtns svg { stroke: #fff; }

.view { height: 544px; margin: 0 1px; position: relative; background: radial-gradient(circle at 350px 272px, #808080 0, #7c7c7c 190px, #5e5e5e 310px, #454545 440px); }
.dock { width: 210px; height: 544px; display: flex; flex-direction: column; position: relative; z-index: 1; }
.tree { position: relative; height: 239px; margin-top: -3px; text-shadow: 0 0 2px #222; color: #e2e2e2; }
.branches { position: absolute; left: 0; top: 0; }
.row { height: 18px; display: flex; align-items: center; gap: 5px; }
.row svg { width: 16px; height: 16px; }
.row .sheet { height: 14px; }
.l0 { padding-left: 24px; } .l0 svg { height: 15px; }
.l1 { padding-left: 44px; gap: 6px; } .l2 { padding-left: 65px; } .l3 { padding-left: 84px; gap: 6px; }
.splitter { display: flex; gap: 2px; padding: 12px 0 0 84px; height: 24px; flex: none; }
.splitter i { width: 6px; height: 3px; background: #ccc; border: solid #555; border-width: 0 0 1px; }
.props { width: 205px; height: 26px; flex: none; margin-left: 1px; border: 1px solid #a0a0a0; outline: 1px solid #666; outline-offset: -2px; display: flex; color: #bcbcbc; background: rgba(40,40,40,.15); }
.props span { width: 100px; padding: 3px 2px; border-right: 2px solid #999; }
.props span + span { border: 0; }
.ptabs { height: 30px; margin-top: auto; width: 182px; display: flex; line-height: 30px; text-align: center; color: #a8a8a8; background: rgba(60,60,60,.55); }
.ptabs span { width: 92px; padding: 2px 0 0 3px; }
.ptabs .on { width: 90px; background: #444; border: 1px solid #333; border-top: 5px solid #323232; line-height: 24px; color: #eee; padding: 0 1px 0 0; }
.model { position: absolute; left: 241px; top: 73px; }
.navcube { position: absolute; left: 551px; top: -2px; }
.cubetext { font-size: 35px; fill: #222426; }
.axis { position: absolute; left: 661px; top: 491px; }
.axis text { font-size: 9px; font-weight: bold; text-anchor: middle; fill: #151515; }

.sub.right { width: 692px; }
.cellbar { display: flex; align-items: center; height: 34px; padding: 3px 10px 0; gap: 6px; }
.field { height: 19px; background: #494949; }
.grow { flex: 1; } .alias { width: 142px; }
.sheetbox { margin: 1px 0 0 11px; width: 670px; display: grid; grid-template: 484px 15px / 655px 15px; background: #292929; }
.tablewrap { overflow: hidden; background: #cecece; }
table { border-collapse: separate; border-spacing: 0; table-layout: fixed; width: 655px; color: #111; }
.c0 { width: 50px; } .ca { width: 14px; } .cb { width: 148px; } .cc { width: 100px; } .cd { width: 137px; } .ce, .cf { width: 100px; } .cg { width: 6px; }
tr { height: 30px; }
td { height: 30px; padding: 0 3px; border: solid #a9a9a9; border-width: 0 1px 1px 0; white-space: nowrap; }
td:last-child { border-right: 0; }
th { height: 30px; background: #292929; color: #d0d0d0; font-weight: normal; text-align: left; padding: 0 0 0 6px; border-bottom: 1px solid #414141; }
.head th { text-align: center; padding: 2px 0 0; border-right: 1px solid #484848; border-bottom-color: #292929; }
.head th:first-child { border-bottom-color: #484848; }
.head th:last-child { border-right: 0; }
.n { text-align: right; }
.p { background: #9c4de6; color: #1b0a2a; }
.vscroll, .hscroll { display: flex; align-items: center; }
.vscroll { flex-direction: column; }
.vscroll svg, .hscroll svg { width: 10px; height: 6px; }
.vscroll .up { transform: rotate(180deg); margin-top: 3px; }
.vscroll i { width: 7px; height: 24px; background: #686868; margin-top: 6px; }
.vscroll .down { margin-top: auto; margin-bottom: 3px; }
.hscroll .lt { transform: rotate(90deg); margin-left: 1px; }
.hscroll i { width: 5px; height: 7px; background: #686868; margin-left: 5px; }
.hscroll .rt { transform: rotate(-90deg); margin-left: auto; margin-right: 2px; }
.corner { background: #cecece; }

.doctabs { height: 36px; flex: none; display: flex; padding-top: 2px; position: relative; }
.doctabs::before { content: ""; position: absolute; left: 99px; top: -3px; width: 87px; height: 4px; background: #557bb6; z-index: 3; }
.dtab { height: 34px; display: flex; align-items: center; padding: 0 0 0 14px; color: #999; background: #3b3b3b; margin-left: 1px; width: 210px; }
.dtab svg { width: 13px; height: 15px; margin-right: 12px; margin-top: -2px; }
.dtab .x { width: 12px; height: 12px; margin: 0 10px 0 auto; fill: none; stroke: #8a8a8a; stroke-width: 2; }
.dtab.on { width: 111px; margin: 0; background: #333; color: #f0f0f0; border-bottom: 4px solid #557bb6; padding: 4px 0 0 13px; border-right: 1px solid #3b3b3b; }
.dtab.on .x { margin-right: 7px; }
.dtab .list { width: 14px; height: 12px; margin-right: 11px; }

.status { height: 40px; display: flex; align-items: center; padding-left: 10px; }
.msg { flex: 1; color: #eee; padding-top: 1px; }
.box { height: 26px; background: #2a2a2a; border: 1px solid #444; display: flex; align-items: center; position: relative; color: #ddd; }
.notif { width: 82px; padding-left: 20px; gap: 4px; margin-right: 11px; }
.notif svg { width: 16px; height: 16px; }
.gesture { width: 94px; height: 28px; background: #557bb6; display: flex; align-items: center; gap: 4px; padding-left: 9px; margin-right: 11px; color: #ccd5e6; }
.gesture svg { width: 16px; height: 16px; }
.dims { width: 192px; margin-right: 29px; padding-left: 20px; }
.tri { position: absolute; right: 2px; bottom: 4px; border: 4px solid transparent; border-top-color: #a8a8a8; border-bottom: 0; }

.taskbar { position: absolute; left: 1286px; top: 282px; width: 117px; height: 19px; background: rgba(90,90,90,.62); display: flex; align-items: center; gap: 7px; padding-left: 2px; color: #ddd; }
.taskbar svg { width: 14px; height: 14px; fill: none; stroke: #3c3c3c; }
.mgrip { width: 6px; height: 17px; background: radial-gradient(#3c3c3c 35%, transparent 40%) 0 0/3px 3px; margin-right: -2px; }
.taskbar span { margin-left: -6px; }
.task { position: absolute; left: 1300px; top: 314px; width: 104px; height: 65px; border-radius: 4px 0 0 4px; overflow: hidden; white-space: nowrap; background: rgba(135,135,135,.68); }
.task-h { height: 25px; background: #2a2a2a; display: flex; align-items: center; gap: 3px; padding-left: 6px; font-weight: bold; font-size: 12px; color: #f2f2f2; }
.task-h svg { width: 14px; height: 12px; }
.task-b { height: 40px; display: flex; align-items: center; gap: 2px; padding: 1px 0 0 16px; color: #e4e4e4; letter-spacing: -.25px; }
.task-b svg { width: 14px; height: 14px; }
```
